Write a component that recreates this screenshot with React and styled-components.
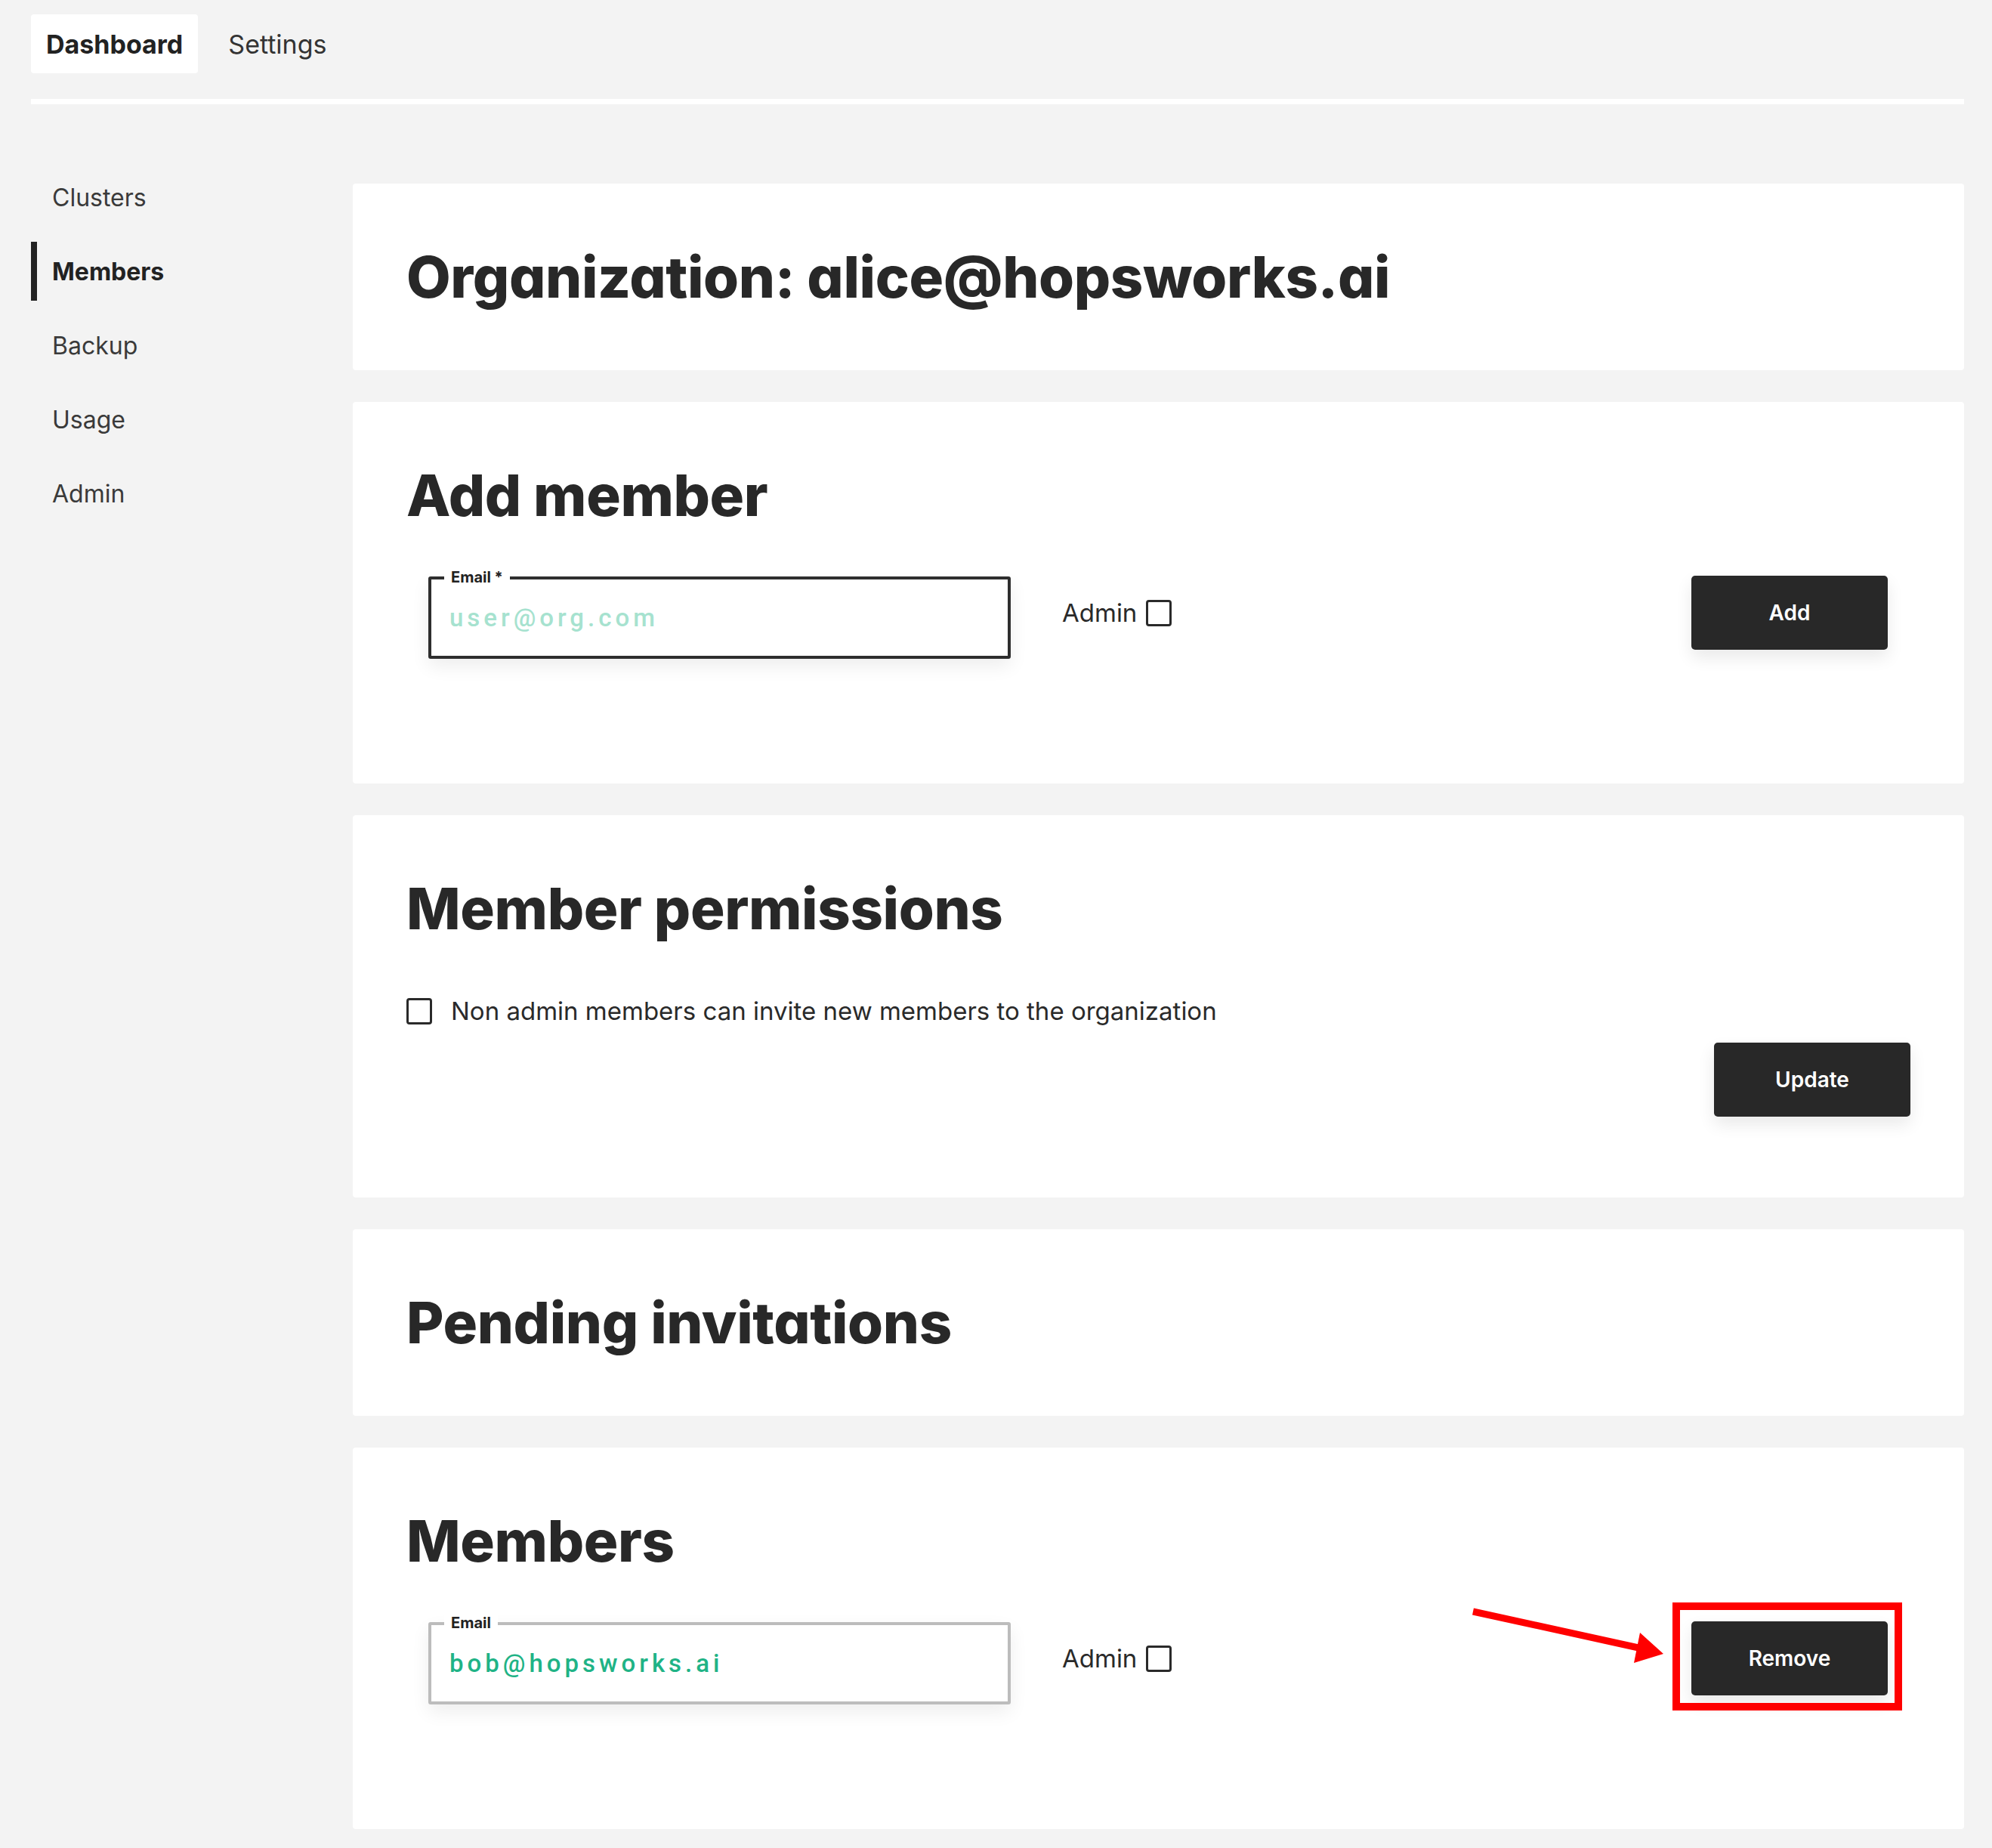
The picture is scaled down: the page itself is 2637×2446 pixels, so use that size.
import React from "react";
import styled, { createGlobalStyle } from "styled-components";

const GlobalStyle = createGlobalStyle`
  html, body {
    margin: 0;
    padding: 0;
    background: #f3f3f3;
  }
  body {
    font-family: Inter, "Liberation Sans", sans-serif;
    color: #333;
  }
  * {
    box-sizing: border-box;
  }
`;

const Page = styled.div`
  padding: 19px 37px 30px 41px;
  min-height: 2446px;
`;

const TopNav = styled.nav`
  display: flex;
  gap: 20px;
`;

const Tab = styled.div`
  display: flex;
  align-items: center;
  height: 78px;
  padding: 0 20px;
  border-radius: 4px;
  background: ${(p) => (p.active ? "#fff" : "transparent")};
  font-size: 34px;
  font-weight: ${(p) => (p.active ? 700 : 400)};
  color: ${(p) => (p.active ? "#222" : "#333")};
`;

const Divider = styled.div`
  height: 7px;
  margin-top: 34px;
  background: #fff;
`;

const Layout = styled.div`
  display: grid;
  grid-template-columns: 426px 1fr;
  margin-top: 84px;
`;

const Sidebar = styled.aside`
  display: flex;
  flex-direction: column;
  gap: 20px;
`;

const SideItem = styled.div`
  display: flex;
  align-items: center;
  height: 78px;
  padding-left: 20px;
  border-left: 8px solid ${(p) => (p.active ? "#222" : "transparent")};
  font-size: 32px;
  font-weight: ${(p) => (p.active ? 700 : 400)};
  color: ${(p) => (p.active ? "#222" : "#3a3a3a")};
`;

const Main = styled.main`
  display: flex;
  flex-direction: column;
  gap: 42px;
  padding-top: 21px;
`;

const Card = styled.section`
  background: #fff;
  border-radius: 4px;
  padding: 71px;
`;

const Heading = styled.h2`
  margin: 0;
  font-size: 76px;
  line-height: 105px;
  font-weight: 800;
  letter-spacing: -0.005em;
  color: #282828;
  font-feature-settings: "cv11" 1;
`;

const FormRow = styled.div`
  display: flex;
  align-items: flex-start;
  padding: 0 30px 0 29px;
  margin-top: 55px;
  margin-bottom: 94px;
`;

const Field = styled.div`
  position: relative;
  display: flex;
  align-items: flex-start;
  width: 771px;
  height: 109px;
  padding: 31px 24px 0;
  border: 4px solid ${(p) => (p.dim ? "#bcbcbc" : "#2e2e2e")};
  border-radius: 3px;
  box-shadow: 0 10px 24px rgba(0, 0, 0, 0.07);
`;

const FieldLabel = styled.label`
  position: absolute;
  top: -15px;
  left: 17px;
  padding: 0 9px;
  background: #fff;
  font-size: 20px;
  line-height: 24px;
  font-weight: 700;
  color: #222;
`;

const TextInput = styled.input`
  width: 100%;
  height: 39px;
  border: none;
  outline: none;
  background: transparent;
  padding: 0;
  font-family: Roboto, Inter, "Liberation Sans", sans-serif;
  font-size: 33px;
  line-height: 39px;
  font-weight: 500;
  letter-spacing: 5px;
  color: #1fb386;

  &::placeholder {
    color: #a6e2cf;
  }
`;

const AdminLabel = styled.label`
  display: flex;
  align-items: center;
  gap: 12px;
  margin-left: 68px;
  margin-top: 31px;
  font-size: 33px;
  line-height: 35px;
  color: #2a2a2a;
`;

const Checkbox = styled.input.attrs({ type: "checkbox" })`
  appearance: none;
  width: 34px;
  height: 35px;
  margin: 0;
  border: 3px solid #2a2a2a;
  border-radius: 4px;
  background: #fff;
`;

const Button = styled.button`
  width: 260px;
  height: 98px;
  border: none;
  border-radius: 5px;
  background: #282828;
  color: #fff;
  font-family: Inter, "Liberation Sans", sans-serif;
  font-size: 28px;
  font-weight: 600;
  box-shadow: 0 10px 22px rgba(0, 0, 0, 0.09);
`;

const RowEnd = styled.div`
  position: relative;
  margin-left: auto;
  margin-top: -1px;
`;

const CheckRow = styled.label`
  display: flex;
  align-items: center;
  gap: 25px;
  margin-top: 66px;
  font-size: 33px;
  line-height: 35px;
  color: #2a2a2a;
`;

const ActionRow = styled.div`
  display: flex;
  justify-content: flex-end;
  margin-top: 24px;
  margin-bottom: 36px;
`;

const Highlight = styled.div`
  position: absolute;
  top: -25px;
  left: -25px;
  right: -19px;
  bottom: -20px;
  border: 10px solid #ff0000;
  pointer-events: none;
`;

const Arrow = styled.svg`
  position: absolute;
  left: -300px;
  top: -30px;
  width: 300px;
  height: 100px;
  overflow: visible;
  pointer-events: none;
`;

const MemberRow = ({ label, value, placeholder, dim, action, annotate }) => (
  <FormRow>
    <Field dim={dim}>
      <FieldLabel>{label}</FieldLabel>
      <TextInput defaultValue={value} placeholder={placeholder} />
    </Field>
    <AdminLabel>
      Admin
      <Checkbox />
    </AdminLabel>
    <RowEnd>
      <Button>{action}</Button>
      {annotate && (
        <>
          <Highlight />
          <Arrow viewBox="0 0 300 100">
            <line x1="11" y1="17" x2="230" y2="65" stroke="#ff0000" strokeWidth="9" />
            <polygon points="224,85 263,73 232,45" fill="#ff0000" />
          </Arrow>
        </>
      )}
    </RowEnd>
  </FormRow>
);

const sideItems = ["Clusters", "Members", "Backup", "Usage", "Admin"];

export default function App() {
  return (
    <Page>
      <GlobalStyle />
      <TopNav>
        <Tab active>Dashboard</Tab>
        <Tab>Settings</Tab>
      </TopNav>
      <Divider />
      <Layout>
        <Sidebar>
          {sideItems.map((item) => (
            <SideItem key={item} active={item === "Members"}>
              {item}
            </SideItem>
          ))}
        </Sidebar>
        <Main>
          <Card>
            <Heading>Organization: alice@hopsworks.ai</Heading>
          </Card>
          <Card>
            <Heading>Add member</Heading>
            <MemberRow label="Email *" placeholder="user@org.com" action="Add" />
          </Card>
          <Card>
            <Heading>Member permissions</Heading>
            <CheckRow>
              <Checkbox />
              Non admin members can invite new members to the organization
            </CheckRow>
            <ActionRow>
              <Button>Update</Button>
            </ActionRow>
          </Card>
          <Card>
            <Heading>Pending invitations</Heading>
          </Card>
          <Card>
            <Heading>Members</Heading>
            <MemberRow
              label="Email"
              value="bob@hopsworks.ai"
              dim
              action="Remove"
              annotate
            />
          </Card>
        </Main>
      </Layout>
    </Page>
  );
}
